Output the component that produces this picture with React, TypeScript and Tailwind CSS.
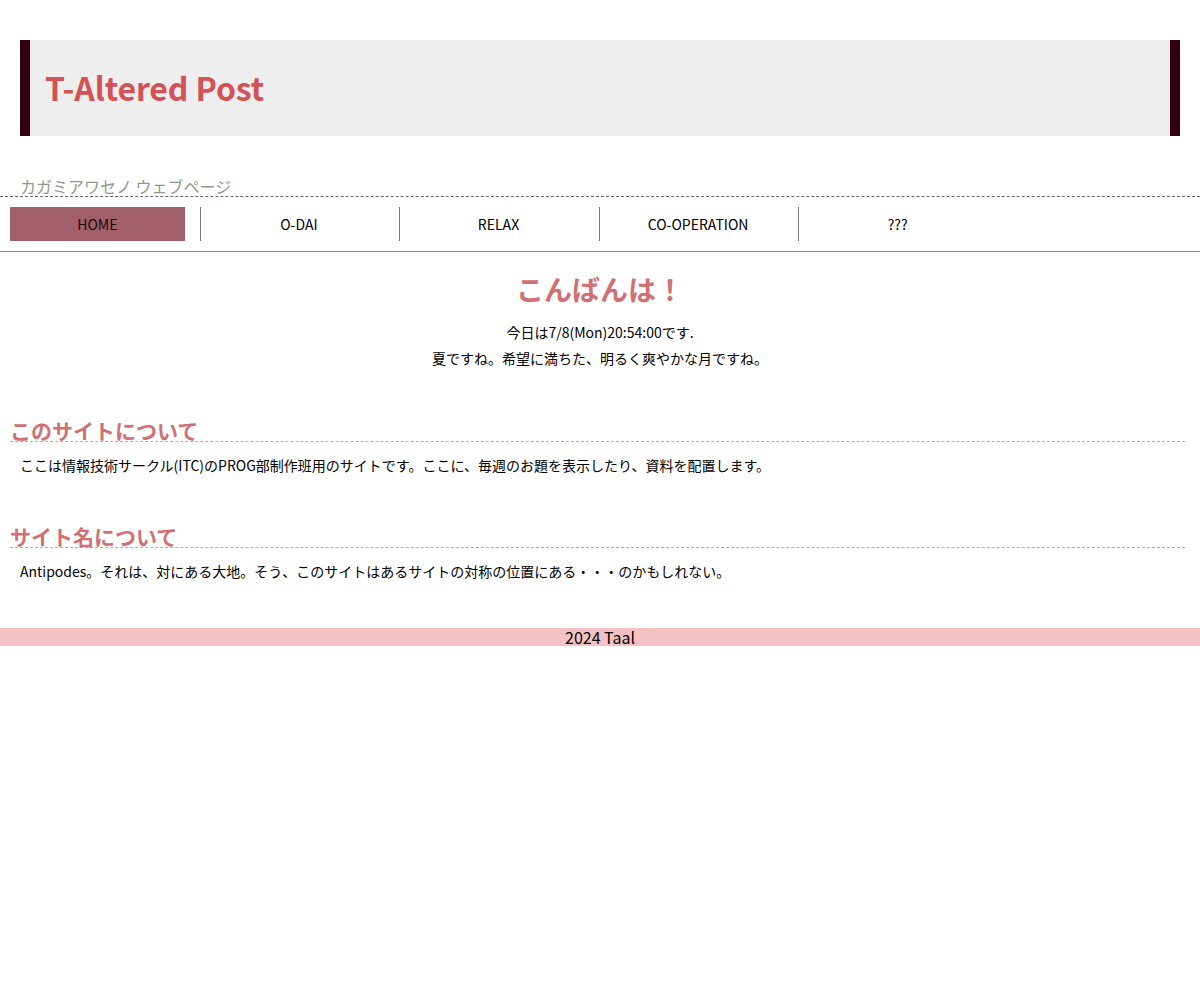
import React from "react";

const navItems = ["HOME", "O-DAI", "RELAX", "CO-OPERATION", "???"];

function Section({ title, children }: { title: string; children: React.ReactNode }) {
  return (
    <section className="mt-[47px] px-[10px] first:mt-0">
      <div className="border-b border-dashed border-[#e09aa4]">
        <h2 className="text-[21px] font-bold leading-[22px] text-[#d07072]">{title}</h2>
      </div>
      <p className="mt-[10px] pl-[10px] pr-[5px] text-[14px] leading-[26px] text-black">{children}</p>
    </section>
  );
}

export default function App() {
  return (
    <div className="min-h-[1000px] bg-white font-['Noto_Sans_CJK_JP','Noto_Sans',sans-serif] text-black">
      <div className="px-5 pt-10">
        <header className="flex h-[96px] items-center border-x-[10px] border-[#330011] bg-[#eeeeee] pl-[15px]">
          <h1 className="-mt-[2px] text-[32px] font-bold leading-none tracking-[-0.1px] text-[#d35255]">T-Altered Post</h1>
        </header>
      </div>

      <div className="mt-[38px] border-b border-dashed border-[#666680] px-5">
        <p className="translate-y-[1px] text-[16px] leading-[22px] text-[#8f9a88]">カガミアワセノ ウェブページ</p>
      </div>

      <nav className="border-b border-[#888888] py-[10px]">
        <ul className="flex">
          {navItems.map((item, i) => (
            <li
              key={item}
              className={`flex h-[34px] w-[199.6px] items-center justify-center text-[14px] ${
                i === 0 ? "" : "border-l border-[#777777]"
              }`}
            >
              {i === 0 ? (
                <span className="ml-[10px] mr-[15px] flex h-full flex-1 items-center justify-center bg-[#a05f6a] text-[#1a0a0f]">
                  {item}
                </span>
              ) : (
                <span className="-ml-[2px]">{item}</span>
              )}
            </li>
          ))}
        </ul>
      </nav>

      <main className="pt-[17px]">
        <div className="text-center">
          <h2 className="text-[28px] font-bold leading-[40px] text-[#d07072]">こんばんは！</h2>
          <p className="mt-[10px] text-[14px] leading-[26px]">今日は7/8(Mon)20:54:00です.</p>
          <p className="text-[14px] leading-[26px]">夏ですね。希望に満ちた、明るく爽やかな月ですね。</p>
        </div>

        <div className="mt-[48px] pr-[5px]">
          <Section title="このサイトについて">
            ここは情報技術サークル(ITC)のPROG部制作班用のサイトです。ここに、毎週のお題を表示したり、資料を配置します。
          </Section>
          <Section title="サイト名について">
            Antipodes。それは、対にある大地。そう、このサイトはあるサイトの対称の位置にある・・・のかもしれない。
          </Section>
        </div>
      </main>

      <footer className="mt-[44px] bg-[#f4c2c2] text-center text-[16px] leading-[18px]">2024 Taal</footer>
    </div>
  );
}
